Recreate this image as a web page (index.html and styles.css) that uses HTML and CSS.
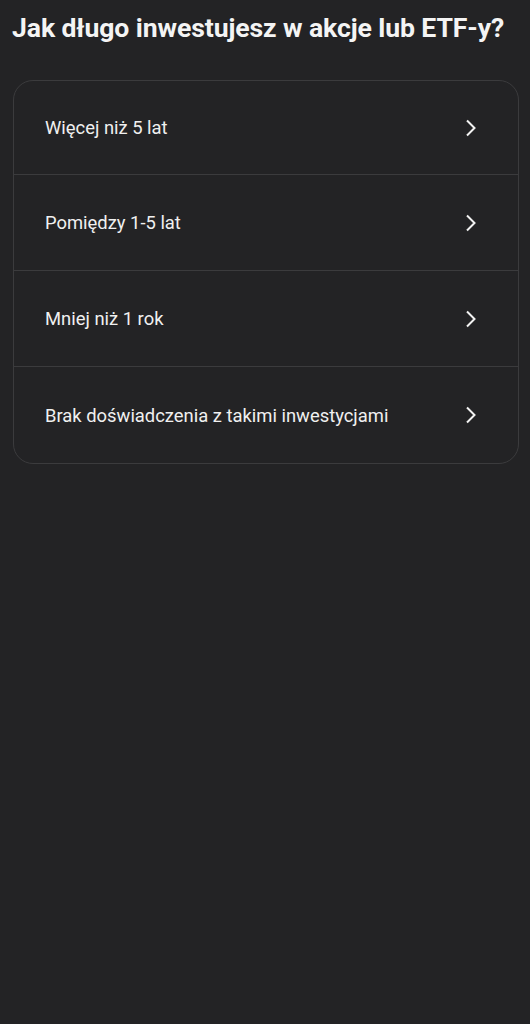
FILE: index.html
```html
<!DOCTYPE html>
<html lang="pl">
<head>
  <meta charset="UTF-8">
  <meta name="viewport" content="width=device-width, initial-scale=1.0">
  <title>Ankieta</title>
  <link rel="stylesheet" href="styles.css">
</head>
<body>
  <div class="page">
    <!-- pytanie -->
    <h1 class="question">Jak długo inwestujesz w akcje lub ETF-y?</h1>
    <!-- lista odpowiedzi -->
    <ul class="answers">
      <li>
        <span>Więcej niż 5 lat</span>
        <svg class="chevron" viewBox="0 0 12 18"><path d="M2 1.5 L9.5 9 L2 16.5"/></svg>
      </li>
      <li>
        <span>Pomiędzy 1-5 lat</span>
        <svg class="chevron" viewBox="0 0 12 18"><path d="M2 1.5 L9.5 9 L2 16.5"/></svg>
      </li>
      <li>
        <span>Mniej niż 1 rok</span>
        <svg class="chevron" viewBox="0 0 12 18"><path d="M2 1.5 L9.5 9 L2 16.5"/></svg>
      </li>
      <li>
        <span>Brak doświadczenia z takimi inwestycjami</span>
        <svg class="chevron" viewBox="0 0 12 18"><path d="M2 1.5 L9.5 9 L2 16.5"/></svg>
      </li>
    </ul>
  </div>
</body>
</html>
```

FILE: styles.css
```css
/* reset */
* {
  margin: 0;
  padding: 0;
  box-sizing: border-box;
}
html, body {
  height: 100%;
  background-color: #232325;
}
body {
  font-family: Roboto, "Liberation Sans", sans-serif;
  color: #f2f2f2;
}
li {
  list-style-type: none;
}
/* strona */
.page {
  padding: 11px 11px 0 12px;
}
.question {
  font-size: 26.6px;
  font-weight: 700;
  line-height: 34px;
  letter-spacing: -0.1px;
  color: #f4f4f4;
  margin-bottom: 35px;
}
/* odpowiedzi */
.answers {
  border: 1px solid #3b3b3d;
  border-radius: 20px;
  margin-left: 1px;
}
.answers li {
  display: flex;
  align-items: center;
  justify-content: space-between;
  height: 96px;
  padding: 0 41px 0 31px;
  font-size: 18.4px;
  color: #f0f0f0;
}
.answers li:first-child {
  height: 93px;
}
.answers li:last-child {
  height: 97px;
}
.answers li + li {
  border-top: 1px solid #3b3b3d;
}
.chevron {
  width: 12px;
  height: 18px;
  fill: none;
  stroke: #f2f2f2;
  stroke-width: 2;
}
```
